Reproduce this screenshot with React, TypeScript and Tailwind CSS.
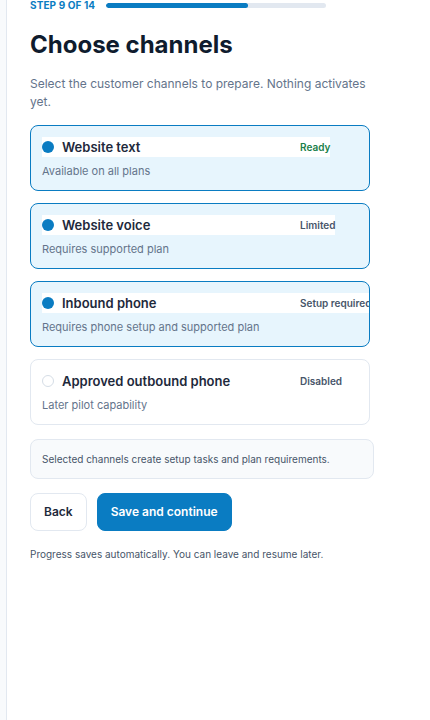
import React, { useState } from 'react';

type Channel = {
  id: string;
  name: string;
  note: string;
  status: string;
  tone: 'ready' | 'muted';
};

const CHANNELS: Channel[] = [
  { id: 'web-text', name: 'Website text', note: 'Available on all plans', status: 'Ready', tone: 'ready' },
  { id: 'web-voice', name: 'Website voice', note: 'Requires supported plan', status: 'Limited', tone: 'muted' },
  { id: 'inbound', name: 'Inbound phone', note: 'Requires phone setup and supported plan', status: 'Setup required', tone: 'muted' },
  { id: 'outbound', name: 'Approved outbound phone', note: 'Later pilot capability', status: 'Disabled', tone: 'muted' },
];

export default function App() {
  const [selected, setSelected] = useState<string[]>(['web-text', 'web-voice', 'inbound']);

  const toggle = (id: string) =>
    setSelected(s => (s.includes(id) ? s.filter(x => x !== id) : [...s, id]));

  return (
    <div className="min-h-screen flex bg-white font-['Inter','Noto_Sans',sans-serif]">
      {/* side rail */}
      <div className="w-[7px] shrink-0 bg-[#f8fafc] border-r border-[#e2e8f0]" />

      <div className="flex-1 pl-[23px]">
        {/* ── Step + progress ── */}
        <div className="flex items-center gap-[11px] h-[11px]">
          <span className="text-[10px] leading-[11px] font-bold text-[#0a7cc2] tracking-[0.01em]">STEP 9 OF 14</span>
          <div className="w-[220px] h-[5px] rounded-full bg-[#e2e8f0] overflow-hidden">
            <div className="h-full rounded-full bg-[#0a7cc2]" style={{ width: `${(9 / 14) * 100}%` }} />
          </div>
        </div>

        <h1 className="mt-[18px] text-[24px] leading-[32px] font-bold text-[#0f1c2e]">Choose channels</h1>
        <p className="mt-[14px] w-[350px] text-[12px] leading-[18px] text-[#64748b]">
          Select the customer channels to prepare. Nothing activates yet.
        </p>

        {/* ── Channel cards ── */}
        <div className="mt-[14px] w-[340px] flex flex-col gap-3">
          {CHANNELS.map(c => {
            const on = selected.includes(c.id);
            return (
              <button
                key={c.id}
                onClick={() => toggle(c.id)}
                className={`h-[66px] text-left rounded-lg border p-[11px] overflow-hidden ${
                  on ? 'border-[#0a7cc2] bg-[#e7f5fd]' : 'border-[#e2e8f0] bg-white'
                }`}
              >
                <div className="flex items-center h-5 w-fit bg-white">
                  <span
                    className={`w-3 h-3 rounded-full shrink-0 ${
                      on ? 'bg-[#0a7cc2]' : 'bg-white border border-[#d5dde6]'
                    }`}
                  />
                  <span className="ml-2 w-[238px] text-[13px] leading-5 font-semibold text-[#1e293b]">{c.name}</span>
                  <span
                    className={`whitespace-nowrap text-[10px] leading-5 font-semibold ${
                      c.tone === 'ready' ? 'text-[#1a7f4b]' : 'text-[#475569]'
                    }`}
                  >
                    {c.status}
                  </span>
                </div>
                <p className="mt-[6px] text-[11px] leading-4 text-[#64748b]">{c.note}</p>
              </button>
            );
          })}
        </div>

        {/* ── Info note ── */}
        <div className="mt-[14px] w-[344px] h-10 flex items-center px-[11px] rounded-lg border border-[#e2e8f0] bg-[#f8fafc]">
          <p className="text-[10px] leading-[14px] text-[#475569]">Selected channels create setup tasks and plan requirements.</p>
        </div>

        {/* ── Actions ── */}
        <div className="mt-[14px] flex items-center gap-[10px]">
          <button className="h-[38px] px-[13px] rounded-lg border border-[#e2e8f0] bg-white text-[12px] font-semibold text-[#1e293b]">
            Back
          </button>
          <button className="h-[38px] px-[13px] rounded-lg border border-[#0a7cc2] bg-[#0a7cc2] text-[12px] font-semibold text-white">
            Save and continue
          </button>
        </div>

        <p className="mt-4 text-[10px] leading-[14px] text-[#475569]">
          Progress saves automatically. You can leave and resume later.
        </p>
      </div>
    </div>
  );
}
